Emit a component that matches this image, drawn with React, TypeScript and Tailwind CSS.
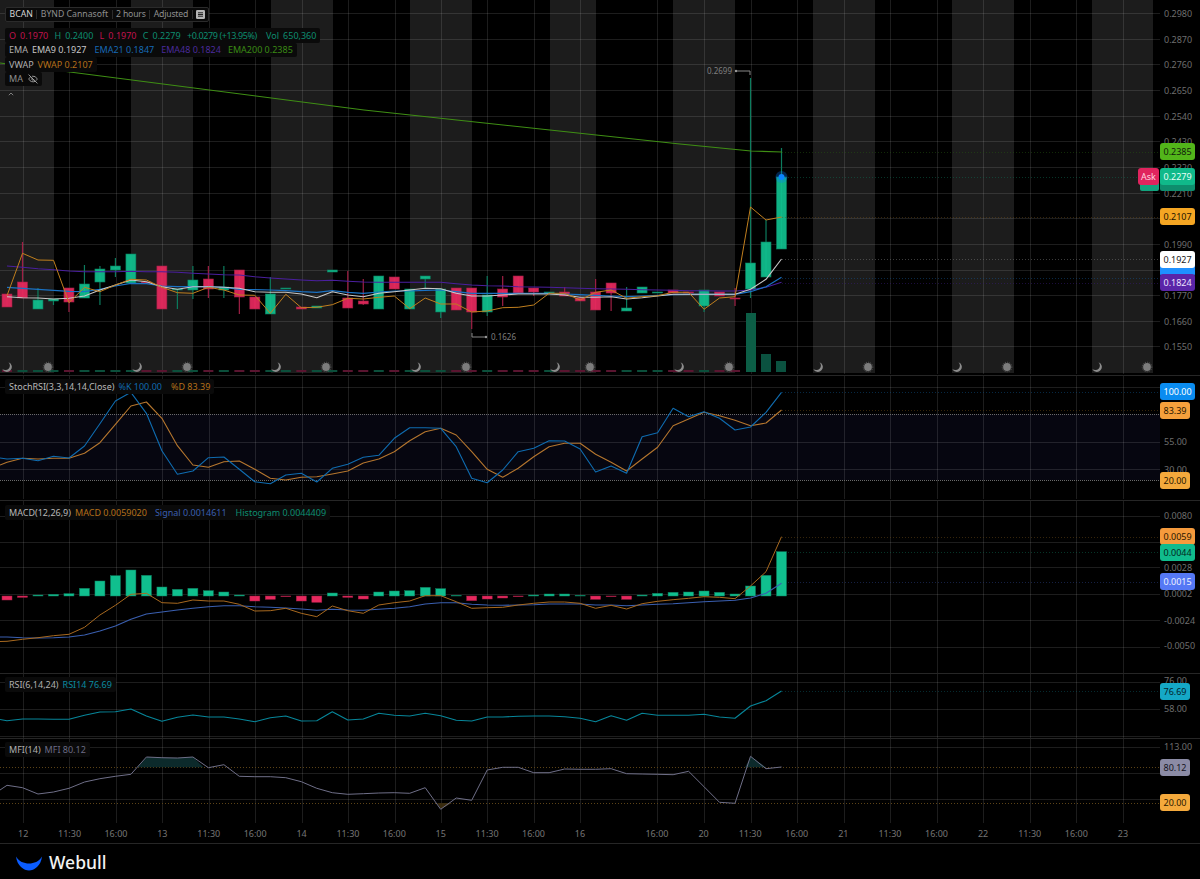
import type { ReactNode } from "react";
import { EyeOff } from "lucide-react";

const WIDTH = 1200;
const STEP = 15.49;
const xAt = (i: number) => 7 + STEP * i;

// vertical grid lines, same in every pane
const vLines = [23, 69, 116, 162, 209, 255, 302, 348, 395, 441, 487, 534, 580, 657, 704, 751, 797, 844, 890, 937, 983, 1030, 1076, 1123];
const bands = [[0, 54], [131, 193], [271, 333], [410, 472], [550, 596], [673, 735], [813, 875], [952, 1014], [1092, 1153]];
const moons = [7, 137, 276, 416, 555, 679, 818, 957, 1097];
const suns = [48, 187, 326, 466, 590, 729, 868, 1007, 1147];

const G = "#10bf8e";
const R = "#e6295e";

// top, bottom, wick top, wick bottom, color
const candles: [number, number, number, number, string][] = [
  [294, 307, 294, 307, R], [282, 298, 242, 298, R], [300, 309, 288, 309, G], [299, 301, 299, 305, G], [288, 302, 288, 312, R],
  [284, 298, 265, 298, G], [269, 282, 266, 305, G], [266, 270, 258, 277, G], [254, 283, 254, 283, G], [282, 283, 282, 283, R],
  [266, 309, 266, 309, R], [289, 290, 289, 309, G], [280, 290, 266, 299, G], [279, 289, 266, 298, R], [287, 290, 266, 298, G],
  [270, 297, 270, 314, R], [297, 309, 297, 309, R], [294, 314, 277, 314, G], [288, 289, 288, 289, G], [307, 309, 307, 309, R],
  [306, 308, 306, 308, G], [270, 272, 270, 272, G], [298, 308, 271, 308, R], [301, 304, 279, 305, R], [276, 309, 276, 309, G],
  [277, 289, 277, 289, R], [289, 309, 289, 309, G], [276, 279, 276, 289, G], [289, 312, 289, 318, G], [288, 310, 288, 310, R],
  [288, 312, 288, 329, R], [295, 312, 276, 316, G], [289, 297, 276, 306, R], [276, 293, 276, 293, R], [288, 292, 288, 296, R],
  [292, 293, 292, 293, G], [292, 296, 287, 296, R], [298, 301, 298, 301, R], [292, 310, 279, 310, R], [283, 293, 283, 311, R],
  [308, 311, 287, 311, G], [287, 293, 287, 293, G], [292, 293, 292, 293, G], [290, 293, 290, 293, R], [292, 293, 292, 293, R],
  [290, 306, 290, 312, G], [292, 296, 292, 296, R], [298, 299, 288, 306, R], [263, 289, 78, 298, G], [242, 277, 220, 277, G],
  [177, 249, 148, 249, G],
];

const volumes = [0, 1, 1, 1, 0, 1, 1, 1, 1, 0, 0, 1, 1, 0, 1, 0, 0, 1, 1, 0, 1, 1, 0, 0, 1, 0, 1, 1, 1, 0, 0, 1, 0, 0, 0, 1, 0, 0, 0, 0, 1, 1, 1, 0, 0, 1, 0, 0];

const white = [200, 203, 204, 207, 205, 198, 180, 165, 150, 155, 170, 178, 170, 170, 172, 175, 185, 187, 187, 192, 203, 185, 195, 200, 190, 185, 180, 175, 176, 190, 198, 198, 195, 192, 192, 192, 195, 202, 202, 200, 207, 203, 198, 193, 193, 193, 193, 193, 178, 148, 87];
const vwap = [197, 70, 90, 91, 218, 172, 185, 165, 148, 150, 172, 188, 190, 172, 180, 195, 196, 250, 193, 233, 232, 224, 205, 207, 202, 198, 236, 204, 222, 222, 246, 243, 233, 232, 225, 190, 190, 210, 187, 180, 205, 200, 197, 187, 187, 238, 204, 200, -69, -30, -39];
const ema21 = [172, 175, 178, 181, 184, 185, 178, 168, 160, 161, 168, 170, 170, 170, 172, 178, 179, 180, 182, 185, 187, 182, 187, 190, 186, 183, 183, 181, 180, 185, 190, 190, 190, 190, 190, 190, 192, 194, 196, 198, 200, 198, 196, 194, 193, 193, 193, 193, 185, 170, 142];
const ema48 = [108, 112, 116, 119, 123, 125, 125, 125, 124, 125, 125, 127, 130, 132, 134, 135, 140, 144, 147, 150, 152, 151, 154, 156, 157, 157, 157, 157, 157, 161, 165, 167, 168, 170, 171, 172, 173, 175, 176, 177, 178, 179, 180, 181, 182, 182, 183, 183, 180, 172, 157];

const stochK = [252, 250, 257, 244, 249, 213, 146, 78, 52, 115, 227, 298, 288, 248, 246, 283, 320, 326, 300, 295, 321, 280, 268, 247, 241, 190, 158, 158, 160, 215, 310, 323, 285, 230, 220, 197, 198, 222, 291, 273, 295, 185, 173, 100, 125, 110, 130, 165, 156, 112, 52];
const stochD = [262, 250, 252, 250, 250, 235, 203, 148, 93, 81, 130, 212, 270, 277, 260, 258, 283, 310, 315, 307, 305, 297, 288, 264, 252, 230, 197, 170, 160, 180, 230, 283, 307, 280, 245, 215, 205, 205, 238, 262, 288, 252, 217, 152, 132, 112, 122, 136, 152, 144, 105];

const hist = [300, 292, 285, 283, 281, 265, 243, 227, 210, 226, 261, 268, 265, 272, 276, 285, 303, 298, 290, 303, 307, 279, 292, 297, 276, 273, 272, 262, 266, 286, 302, 297, 294, 290, 285, 282, 282, 286, 298, 290, 298, 285, 280, 277, 276, 273, 277, 282, 258, 226, 155];
const macd = [424, 418, 413, 407, 403, 382, 345, 316, 283, 280, 308, 310, 300, 303, 303, 313, 333, 332, 325, 340, 350, 318, 332, 340, 315, 308, 303, 287, 287, 305, 325, 323, 322, 315, 310, 306, 306, 310, 325, 316, 327, 311, 304, 299, 295, 290, 292, 296, 258, 215, 110];
const signal = [411, 413, 414, 413, 411, 405, 393, 378, 358, 342, 336, 330, 325, 320, 317, 317, 320, 322, 324, 327, 331, 328, 330, 331, 328, 325, 320, 312, 308, 308, 313, 315, 316, 315, 314, 312, 312, 312, 315, 315, 317, 315, 313, 311, 308, 305, 303, 301, 294, 280, 250];

const rsi = [152, 147, 147, 148, 148, 136, 126, 125, 117, 138, 154, 142, 135, 141, 141, 147, 155, 143, 138, 153, 152, 125, 150, 147, 130, 136, 138, 130, 137, 151, 153, 141, 141, 139, 138, 138, 140, 145, 155, 137, 151, 130, 136, 136, 136, 133, 141, 145, 108, 92, 63];
const mfi = [346, 353, 372, 366, 355, 336, 326, 319, 313, 261, 263, 264, 261, 293, 284, 319, 320, 320, 323, 335, 355, 368, 373, 371, 369, 368, 370, 353, 418, 384, 391, 300, 292, 292, 308, 308, 297, 298, 298, 296, 311, 312, 313, 314, 304, 350, 397, 400, 259, 296, 291];

// the numbers above were read from 3x crops, so z maps back to page y like this
const toLine = (zs: number[], base: number) => zs.map((z, i) => `${xAt(i).toFixed(1)},${(base + z / 3).toFixed(1)}`).join(" ");

const Grid = ({ top, height, hLines }: { top: number; height: number; hLines: number[] }) => (
  <g shapeRendering="crispEdges" stroke="rgba(255,255,255,0.115)" strokeWidth="1">
    {vLines.map((x) => (
      <line key={x} x1={x + 0.5} x2={x + 0.5} y1={top} y2={top + height} />
    ))}
    {hLines.map((y) => (
      <line key={y} x1="0" x2="1160" y1={y + 0.5} y2={y + 0.5} />
    ))}
  </g>
);

const Dots = ({ y, color, from = 782, opacity = 0.5 }: { y: number; color: string; from?: number; opacity?: number }) => (
  <line x1={from} x2="1160" y1={y + 0.5} y2={y + 0.5} stroke={color} strokeOpacity={opacity} strokeWidth="1" strokeDasharray="1 2" shapeRendering="crispEdges" />
);

const Line = ({ pts, color, w = 1 }: { pts: string; color: string; w?: number }) => (
  <polyline points={pts} fill="none" stroke={color} strokeWidth={w} strokeLinejoin="round" />
);

const Plot = ({ top, height, children }: { top: number; height: number; children: ReactNode }) => (
  <svg className="absolute inset-0" width={WIDTH} height={height} viewBox={`0 ${top} ${WIDTH} ${height}`}>
    {children}
  </svg>
);

const AxisLabel = ({ y, text }: { y: number; text: string }) => (
  <span className="absolute left-[1164px] text-[9px] leading-[12px] text-[#6e6e6e]" style={{ top: y - 6 }}>
    {text}
  </span>
);

const Tag = ({ y, text, className }: { y: number; text: string; className: string }) => (
  <span
    className={`absolute left-[1160px] flex h-[17px] items-center rounded-[3px] px-[3.5px] text-[9px] leading-none ${className}`}
    style={{ top: y }}
  >
    {text}
  </span>
);

const LegendRow = ({ children }: { children: ReactNode }) => (
  <div className="flex h-[14.5px] items-center rounded-[2px] bg-[#0a0a0a] px-1 text-[9px] leading-none whitespace-nowrap">{children}</div>
);

const OHLC = ({ label, value, color }: { label: string; value: string; color: string }) => (
  <span className={`flex gap-1 ${color}`}>
    <span>{label}</span>
    <span>{value}</span>
  </span>
);

const MainPane = () => {
  const grid = Array.from({ length: 14 }, (_, k) => Math.round(13 + 25.65 * k));
  const prices = ["0.2980", "0.2870", "0.2760", "0.2650", "0.2540", "0.2430", "0.2320", "0.2210", "", "0.1990", "", "0.1770", "0.1660", "0.1550"];
  return (
    <div className="relative h-[376px] shrink-0 border-b border-[#262626]">
      <Plot top={0} height={375}>
        {bands.map(([a, b]) => (
          <rect key={a} x={a} y="0" width={b - a} height="373" fill="#1c1c1c" />
        ))}
        <Grid top={0} height={374} hLines={grid} />
        {volumes.map((v, i) => (
          <rect key={i} x={xAt(i) - 5} y="370" width="10" height="2" fill={v ? "#0b4f3b" : "#5a1530"} />
        ))}
        <rect x="746" y="313" width="10" height="59" fill="#0c5e46" />
        <rect x="761" y="354" width="10" height="18" fill="#0b5240" />
        <rect x="776" y="361" width="10" height="11" fill="#0b5240" />
        {moons.map((x) => (
          <path key={x} transform={`translate(${x} 367)`} d="M1.5 -4.8 A5 5 0 1 1 -4.8 1.8 A4.2 4.2 0 0 0 1.5 -4.8Z" fill="#8c8c8c" />
        ))}
        {suns.map((x) => (
          <g key={x}>
            <circle cx={x} cy="367" r="3.9" fill="#7c7c7c" />
            <circle cx={x} cy="367" r="4.8" fill="none" stroke="#6a6a6a" strokeWidth="0.8" strokeDasharray="1 1" />
          </g>
        ))}
        {candles.map(([t, b, wt, wb, c], i) => {
          const x = xAt(i);
          const dark = c === G ? "#0c7c5e" : "#a01f45";
          return (
            <g key={i}>
              <line x1={x} x2={x} y1={wt} y2={wb} stroke={dark} strokeWidth="1.2" />
              <rect x={x - 5} y={t} width="10" height={b - t} fill={c} fillOpacity="0.93" stroke={dark} strokeWidth="0.6" />
            </g>
          );
        })}
        <Line pts="0,63 364,110 680,144 751,151 782,152" color="#3f8f14" w={1.1} />
        <Line pts={toLine(ema48, 230)} color="#4a1f9e" w={1.1} />
        <Line pts={toLine(ema21, 230)} color="#1a72c4" w={1.2} />
        <Line pts={toLine(white, 230)} color="#c8c8c8" w={1.1} />
        <Line pts={toLine(vwap, 230)} color="#c07f1e" w={1} />
        <Dots y={152} color="#24540e" />
        <Dots y={177} color="#0c6a50" />
        <Dots y={217} color="#6b4a16" />
        <Dots y={259} color="#777777" />
        <Dots y={278} color="#12508c" />
        <Dots y={283} color="#38197a" />
        <circle cx="781.5" cy="177" r="6" fill="#0a7cff" fillOpacity="0.3" />
        <circle cx="781.5" cy="177" r="3" fill="#0a84ff" />
        <polyline points="736,71 750,71 750,75" fill="none" stroke="#888888" strokeWidth="1" />
        <circle cx="736" cy="71" r="1.2" fill="#999999" />
        <polyline points="472,333 472,337 486,337" fill="none" stroke="#888888" strokeWidth="1" />
        <circle cx="486" cy="337" r="1.2" fill="#999999" />
      </Plot>

      <span className="absolute left-[707px] top-[65px] text-[8px] leading-[12px] text-[#7e7e7e]">0.2699</span>
      <span className="absolute left-[491px] top-[331px] text-[8px] leading-[12px] text-[#7e7e7e]">0.1626</span>

      {/* LEGEND */}
      <div className="absolute left-[5px] top-[7px] flex flex-col items-start">
        <div className="mb-[6px] flex h-[15px] items-center rounded-[2px] border border-[#2b2b2b] bg-[#0a0a0a] text-[8.7px] leading-none whitespace-nowrap text-[#8f8f8f]">
          <span className="border-r border-[#2b2b2b] px-[3.5px] text-[#d4d4d4]">BCAN</span>
          <span className="border-r border-[#2b2b2b] px-[3.5px]">BYND Cannasoft</span>
          <span className="border-r border-[#2b2b2b] px-[3.5px] tracking-[-0.2px]">2 hours</span>
          <span className="border-r border-[#2b2b2b] px-[3.5px] tracking-[-0.2px]">Adjusted</span>
          <svg className="mx-[3px]" width="9" height="9" viewBox="0 0 9 9">
            <rect width="9" height="9" rx="1.2" fill="#b5b5b5" />
            <path d="M2 2.8h5M2 4.5h5M2 6.2h5" stroke="#111111" strokeWidth="0.9" />
          </svg>
        </div>
        <LegendRow>
          <div className="flex gap-[6.3px]">
            <OHLC label="O" value="0.1970" color="text-[#c0134e]" />
            <OHLC label="H" value="0.2400" color="text-[#0d8d70]" />
            <OHLC label="L" value="0.1970" color="text-[#c0134e]" />
            <OHLC label="C" value="0.2279" color="text-[#0d8d70]" />
            <span className="tracking-[-0.4px] text-[#0d8d70]">+0.0279 (+13.95%)</span>
            <span className="ml-[3px]"><OHLC label="Vol" value="650,360" color="text-[#0d8d70]" /></span>
          </div>
        </LegendRow>
        <LegendRow>
          <span className="mr-[4px] text-[#b0b0b0]">EMA</span>
          <span className="mr-[8px] text-[#c8c8c8]">EMA9 0.1927</span>
          <span className="mr-[7px] text-[#1669b5]">EMA21 0.1847</span>
          <span className="mr-[7px] text-[#4a2a9c]">EMA48 0.1824</span>
          <span className="text-[#3a8a14]">EMA200 0.2385</span>
        </LegendRow>
        <LegendRow>
          <span className="mr-[4px] text-[#b0b0b0]">VWAP</span>
          <span className="text-[#b5701a]">VWAP 0.2107</span>
        </LegendRow>
        <LegendRow>
          <span className="mr-[5px] text-[#8f8f8f]">MA</span>
          <EyeOff size={10} className="text-[#b0b0b0]" />
        </LegendRow>
        <svg className="ml-[3px] mt-[6px]" width="6" height="4" viewBox="0 0 6 4">
          <path d="M0.8 3.2 L3 1 L5.2 3.2" fill="none" stroke="#8a8a8a" strokeWidth="0.9" />
        </svg>
      </div>

      {/* PRICE AXIS */}
      {prices.map((p, k) => p && <AxisLabel key={p} y={grid[k] + 0.5} text={p} />)}
      <span className="absolute left-[1140px] top-[180px] h-[11px] w-[19px] rounded-[2px] bg-[#12a37e]" />
      <span className="absolute left-[1160px] top-[180px] h-[11px] w-[35px] rounded-[2px] bg-[#0e8d6d]" />
      <span className="absolute left-[1160px] top-[264px] h-[12px] w-[35px] rounded-[2px] bg-[#1e90ff]" />
      <Tag y={143} text="0.2385" className="bg-[#52b51a] text-[#10200a]" />
      <span className="absolute left-[1138px] top-[168px] flex h-[17px] w-[21px] items-center justify-center rounded-[3px] bg-[#e0245e] text-[9px] leading-none text-[#ffd5e0]">Ask</span>
      <Tag y={168} text="0.2279" className="bg-[#10b98a] text-[#e6fff6]" />
      <Tag y={208} text="0.2107" className="bg-[#f5a623] text-[#1e1400]" />
      <Tag y={251} text="0.1927" className="bg-white text-[#1a1a1a]" />
      <Tag y={274} text="0.1824" className="bg-[#5a25a8] text-[#ece4ff]" />
    </div>
  );
};

const StochPane = () => (
  <div className="relative h-[125px] shrink-0 border-b border-[#262626]">
    <Plot top={376} height={124}>
      <rect x="0" y="414" width="1160" height="66" fill="#060610" />
      <Grid top={376} height={123} hLines={[387, 442, 469]} />
      <line x1="0" x2="1160" y1="414.5" y2="414.5" stroke="#6a6a6a" strokeDasharray="1 1" shapeRendering="crispEdges" />
      <line x1="0" x2="1160" y1="480.5" y2="480.5" stroke="#6a6a6a" strokeDasharray="1 1" shapeRendering="crispEdges" />
      <Dots y={392} color="#0b4f85" />
      <Dots y={410} color="#6b4a16" />
      <Line pts={`0,465 ${toLine(stochD, 375)}`} color="#b5762e" w={1.1} />
      <Line pts={`0,458 ${toLine(stochK, 375)}`} color="#0f6cb0" w={1.1} />
    </Plot>
    <div className="absolute left-[5px] top-[3px]">
      <LegendRow>
        <span className="mr-1 text-[#b8b8b8]">StochRSI(3,3,14,14,Close)</span>
        <span className="mr-[9px] text-[#1069ae]">%K 100.00</span>
        <span className="text-[#b5701a]">%D 83.39</span>
      </LegendRow>
    </div>
    <AxisLabel y={66} text="55.00" />
    <AxisLabel y={94} text="30.00" />
    <Tag y={7} text="100.00" className="bg-[#0a8cf0] text-white" />
    <Tag y={26} text="83.39" className="bg-[#f5a03c] text-[#2a1800]" />
    <Tag y={96} text="20.00" className="bg-[#f4a93c] text-[#2a1800]" />
  </div>
);

const MacdPane = () => (
  <div className="relative h-[173px] shrink-0 border-b border-[#262626]">
    <Plot top={501} height={172}>
      <Grid top={501} height={172} hLines={[516, 542, 567, 594, 620, 647]} />
      <Dots y={537} color="#6b4a16" />
      <Dots y={552} color="#0c6a50" />
      <Dots y={582} color="#2a3f85" />
      {hist.map((z, i) => {
        const y1 = Math.min(z, 288);
        const y2 = Math.max(z, 288);
        return (
          <rect
            key={i}
            x={xAt(i) - 5}
            y={500 + y1 / 3}
            width="10"
            height={(y2 - y1) / 3}
            fill={z < 288 ? G : R}
            stroke={z < 288 ? "#0c7c5e" : "#a01f45"}
            strokeWidth="0.5"
          />
        );
      })}
      <Line pts={`0,637 ${toLine(signal, 500)}`} color="#3a5fb0" w={1.1} />
      <Line pts={`0,641.5 ${toLine(macd, 500)}`} color="#a8691f" w={1} />
    </Plot>
    <div className="absolute left-[5px] top-[4px]">
      <LegendRow>
        <span className="mr-1 text-[#b8b8b8]">MACD(12,26,9)</span>
        <span className="mr-2 text-[#b5701a]">MACD 0.0059020</span>
        <span className="mr-[9px] text-[#3a5fb0]">Signal 0.0014611</span>
        <span className="text-[#0d8d70]">Histogram 0.0044409</span>
      </LegendRow>
    </div>
    <AxisLabel y={15} text="0.0080" />
    <AxisLabel y={67} text="0.0028" />
    <AxisLabel y={93} text="0.0002" />
    <AxisLabel y={120} text="-0.0024" />
    <AxisLabel y={145} text="-0.0050" />
    <Tag y={27} text="0.0059" className="bg-[#f59a3c] text-[#2a1800]" />
    <Tag y={43} text="0.0044" className="bg-[#10bb8d] text-[#03261b]" />
    <Tag y={72} text="0.0015" className="bg-[#5578f5] text-[#eef2ff]" />
  </div>
);

const RsiPane = () => (
  <div className="relative h-[65px] shrink-0 border-b border-[#262626]">
    <Plot top={674} height={64}>
      <Grid top={674} height={64} hLines={[682, 709, 736]} />
      <Dots y={691} color="#0a5560" />
      <Line pts={`0,719.5 ${toLine(rsi, 670)}`} color="#07869a" w={1.1} />
    </Plot>
    <div className="absolute left-[5px] top-[3px]">
      <LegendRow>
        <span className="mr-1 text-[#b0b0b0]">RSI(6,14,24)</span>
        <span className="text-[#0a8aa0]">RSI14 76.69</span>
      </LegendRow>
    </div>
    <AxisLabel y={7} text="76.00" />
    <AxisLabel y={35} text="58.00" />
    <Tag y={9} text="76.69" className="bg-[#15a8c6] text-[#04222a]" />
  </div>
);

const MfiPane = () => (
  <div className="relative h-[84px] shrink-0">
    <Plot top={739} height={84}>
      <Grid top={739} height={84} hLines={[747, 773, 799]} />
      <Dots y={767} color="#5c4317" from={0} opacity={1} />
      <Dots y={803} color="#5c4317" from={0} opacity={1} />
      <polygon points="137.6,767.3 147,757 162,757.7 178,758 193,757 203.5,767.3" fill="#0c2a2b" />
      <polygon points="745,767.3 751,756.5 766,767.3" fill="#0c2a2b" />
      <polygon points="437,803 441,809 452,803" fill="#3a2c10" />
      <Line pts={`0,790 ${toLine(mfi, 670)}`} color="#6f6f88" w={1} />
    </Plot>
    <div className="absolute left-[5px] top-[3px]">
      <LegendRow>
        <span className="mr-1 text-[#b0b0b0]">MFI(14)</span>
        <span className="text-[#6c6c85]">MFI 80.12</span>
      </LegendRow>
    </div>
    <AxisLabel y={8} text="113.00" />
    <Tag y={20} text="80.12" className="bg-[#8b8ba5] text-[#14141e]" />
    <Tag y={55} text="20.00" className="bg-[#f4a93c] text-[#2a1800]" />
  </div>
);

const firstTicks = ["12", "11:30", "16:00", "13", "11:30", "16:00", "14", "11:30", "16:00", "15", "11:30", "16:00", "16"];
const lastTicks = ["16:00", "20", "11:30", "16:00", "21", "11:30", "16:00", "22", "11:30", "16:00", "23"];

const TimeAxis = () => (
  <div className="flex h-[21px] shrink-0 items-center border-b border-[#262626] text-[9px] leading-none text-[#767676]">
    {firstTicks.map((t, i) => (
      <span key={i} className="w-[46.4px] shrink-0 text-center">{t}</span>
    ))}
    <span className="w-[30.6px] shrink-0" />
    {lastTicks.map((t, i) => (
      <span key={i} className="w-[46.6px] shrink-0 text-center">{t}</span>
    ))}
  </div>
);

const App = () => {
  return (
    <div className="flex h-[879px] w-[1200px] flex-col overflow-hidden bg-black font-['Noto_Sans',sans-serif]">
      <MainPane />
      <StochPane />
      <MacdPane />
      <RsiPane />
      <MfiPane />
      <TimeAxis />
      {/* FOOTER */}
      <div className="flex flex-1 items-center gap-[7px] pl-4 pt-[3px]">
        <svg width="26" height="15" viewBox="0 0 26 15">
          <path d="M0 0.5 C1 10 8 14.5 13 14.5 C18 14.5 25 10 26 0.5 C23 5.5 18 7.5 13 7.5 C8 7.5 3 5.5 0 0.5Z" fill="#0a5cff" />
        </svg>
        <span className="text-[17.5px] font-medium leading-none text-[#f2f2f2]">Webull</span>
      </div>
    </div>
  );
};

export default App;
